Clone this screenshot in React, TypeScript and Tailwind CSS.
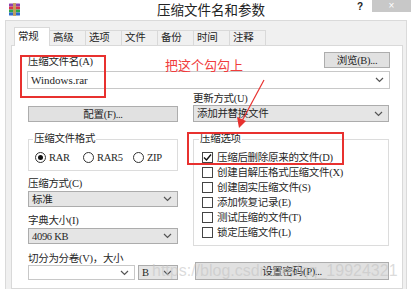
import React from "react";

function Chevron() {
  return (
    <svg width="9" height="6" viewBox="0 0 9 6" className="shrink-0">
      <path d="M1 1 L4.5 4.5 L8 1" fill="none" stroke="#555" strokeWidth="1.2" />
    </svg>
  );
}

function GraySelect({ text, h = "h-[16px]" }: { text: string; h?: string }) {
  return (
    <div className={`flex items-center justify-between ${h} border border-[#acacac] bg-[#e5e5e5] pl-[3px] pr-[5px]`}>
      <span className="leading-[13px]">{text}</span>
      <Chevron />
    </div>
  );
}

function Btn({ text, className = "" }: { text: string; className?: string }) {
  return (
    <div className={`flex items-center justify-center border border-[#adadad] bg-[#e1e1e1] leading-[13px] ${className}`}>
      {text}
    </div>
  );
}

function Radio({ label, checked, w }: { label: string; checked?: boolean; w: string }) {
  return (
    <div className={`flex items-center gap-[3px] ${w}`}>
      <div className="flex h-[11px] w-[11px] items-center justify-center rounded-full border border-[#333] bg-white">
        {checked && <div className="h-[5px] w-[5px] rounded-full bg-[#111]" />}
      </div>
      <span className="leading-[13px]">{label}</span>
    </div>
  );
}

function Check({ label, checked }: { label: string; checked?: boolean }) {
  return (
    <div className="flex h-[15px] items-center gap-[4px]">
      <div className="flex h-[11px] w-[11px] items-center justify-center border border-[#444] bg-white">
        {checked && (
          <svg width="9" height="9" viewBox="0 0 9 9">
            <path d="M1 4.5 L3.5 7 L8 1.5" fill="none" stroke="#111" strokeWidth="1.4" />
          </svg>
        )}
      </div>
      <span className="leading-[13px]">{label}</span>
    </div>
  );
}

function RarIcon() {
  return (
    <svg width="13" height="13" viewBox="0 0 13 13">
      <rect x="1" y="0.5" width="11" height="3" rx="0.5" fill="#8e3fb0" />
      <rect x="1" y="3.5" width="11" height="3" rx="0.5" fill="#d8344a" />
      <rect x="1" y="6.5" width="11" height="3" rx="0.5" fill="#2fa84f" />
      <rect x="1" y="9.5" width="11" height="3" rx="0.5" fill="#2d6bd0" />
      <rect x="5" y="0" width="3" height="13" fill="#c9a25a" opacity="0.9" />
    </svg>
  );
}

export default function App() {
  const tabs = ["高级", "选项", "文件", "备份", "时间", "注释"];
  return (
    <div className="relative flex h-[289px] w-[411px] flex-col overflow-hidden bg-white text-[10.5px] tracking-[-0.3px] text-[#262626] font-['Liberation_Serif','Noto_Sans_CJK_SC',serif]">
      {/* title bar */}
      <div className="flex h-[20px] shrink-0 items-start tracking-normal">
        <div className="ml-[8px] mt-[3px]">
          <RarIcon />
        </div>
        <div className="ml-[136px] h-[18px] text-[13.5px] leading-[18px] text-[#222] font-['Noto_Sans_CJK_SC',sans-serif]">
          压缩文件名和参数
        </div>
        <div className="ml-auto mt-[2px] mr-[9px] text-[10px] font-bold leading-[10px] text-[#222] font-['Liberation_Sans',sans-serif]">
          ?
        </div>
        <div className="flex h-[12px] w-[39px] items-center justify-center bg-[#c8c8c8] text-[10px] leading-[10px] text-white font-['Liberation_Sans',sans-serif]">
          ×
        </div>
      </div>

      {/* body */}
      <div className="ml-[5px] mr-[4px] flex flex-1 flex-col border-l border-r border-t border-[#dadada] bg-[#f0f0f0] pl-[5px] pr-[3px] pt-[6px]">
        {/* tabs */}
        <div className="flex h-[18px] items-end pl-[3px]">
          <div className="relative z-10 mb-[-1px] flex h-[19px] w-[36px] items-center border border-b-0 border-[#d9d9d9] bg-white pl-[3px]">
            常规
          </div>
          {tabs.map((t) => (
            <div key={t} className="flex h-[15px] w-[36px] items-center border-r border-t border-[#d9d9d9] bg-[#f0f0f0] pl-[3px]">
              {t}
            </div>
          ))}
        </div>

        {/* panel */}
        <div className="flex-1 border border-[#d9d9d9] bg-white pl-[16px] pr-[12px] pt-[6px]">
          <div className="flex h-[16px] items-end justify-between">
            <span className="leading-[12px]">压缩文件名(A)</span>
            <Btn text="浏览(B)..." className="h-[16px] w-[66px]" />
          </div>
          <div className="-ml-[1px] mt-[3px] flex h-[18px] items-center justify-between border border-[#c8c8c8] bg-white pl-[3px] pr-[5px]">
            <span className="text-[11px] leading-[14px] tracking-normal">Windows.rar</span>
            <Chevron />
          </div>

          <div className="mt-[3px] flex gap-[15px]">
            {/* left column */}
            <div className="flex w-[150px] flex-col">
              <div className="h-[14px]" />
              <Btn text="配置(F)..." className="h-[16px]" />
              <fieldset className="mt-[11px] border border-[#dcdcdc] pb-[6px] pl-[6px] pt-[6px]">
                <legend className="-ml-[2px] px-[1px] leading-[12px]">压缩文件格式</legend>
                <div className="flex h-[13px] items-center">
                  <Radio label="RAR" checked w="w-[48px]" />
                  <Radio label="RAR5" w="w-[50px]" />
                  <Radio label="ZIP" w="w-[40px]" />
                </div>
              </fieldset>
              <div className="mt-[7px] leading-[12px]">压缩方式(C)</div>
              <div className="mt-[1px]">
                <GraySelect text="标准" />
              </div>
              <div className="mt-[8px] leading-[12px]">字典大小(I)</div>
              <div className="mt-[1px]">
                <GraySelect text="4096 KB" />
              </div>
              <div className="mt-[9px] leading-[12px]">切分为分卷(V)，大小</div>
              <div className="flex gap-[3px]">
                <div className="flex h-[15px] w-[107px] items-center justify-end border border-[#c8c8c8] bg-white pr-[5px]">
                  <Chevron />
                </div>
                <div className="flex-1">
                  <GraySelect text="B" h="h-[15px]" />
                </div>
              </div>
            </div>

            {/* right column */}
            <div className="flex w-[196px] flex-col">
              <div className="h-[13px] leading-[13px]">更新方式(U)</div>
              <GraySelect text="添加并替换文件" h="h-[17px]" />
              <fieldset className="mt-[11px] border border-[#dcdcdc] pb-[5px] pl-[8px] pt-[5px]">
                <legend className="-ml-[3px] px-[1px] leading-[12px]">压缩选项</legend>
                <Check label="压缩后删除原来的文件(D)" checked />
                <Check label="创建自解压格式压缩文件(X)" />
                <Check label="创建固实压缩文件(S)" />
                <Check label="添加恢复记录(E)" />
                <Check label="测试压缩的文件(T)" />
                <Check label="锁定压缩文件(L)" />
              </fieldset>
              <Btn text="设置密码(P)..." className="mt-[16px] ml-[2px] h-[18px]" />
            </div>
          </div>
        </div>
      </div>

      {/* annotations */}
      <div className="absolute left-[20px] top-[55px] h-[43px] w-[86px] border-2 border-[#e8312f]" />
      <div className="absolute left-[187px] top-[132px] h-[33px] w-[157px] border-2 border-[#e8312f]" />
      <div className="absolute left-[165px] top-[57px] text-[13px] leading-[16px] tracking-normal text-[#f03c3c] font-['Noto_Sans_CJK_SC',sans-serif]">
        把这个勾勾上
      </div>
      <svg className="absolute left-0 top-0" width="411" height="289" viewBox="0 0 411 289">
        <line x1="264" y1="80" x2="242" y2="121" stroke="#e8312f" strokeWidth="1.2" />
        <polygon points="239,128 237,117 246,121" fill="#e8312f" />
      </svg>
      <div className="absolute left-[152px] top-[261px] text-[16px] leading-[20px] tracking-normal text-[#c4c4c4]/60 font-['Liberation_Sans',sans-serif]">
        https://blog.csdn.net/qq_19924321
      </div>
    </div>
  );
}
